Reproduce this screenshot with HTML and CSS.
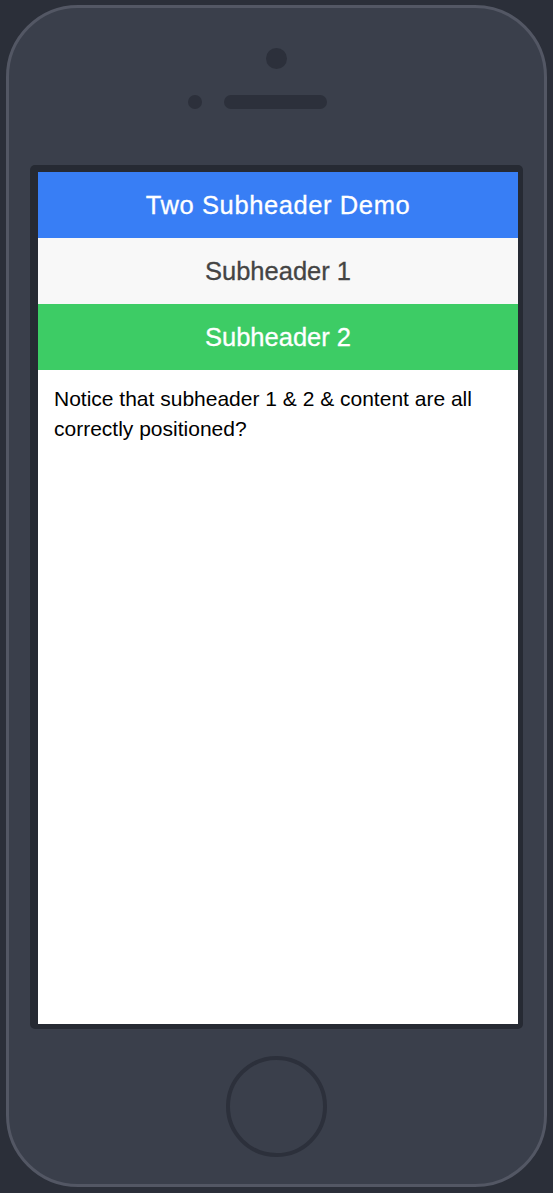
FILE: index.html
```html
<!DOCTYPE html>
<html>
<head>
<meta charset="utf-8">
<title>Two Subheader Demo</title>
<link rel="stylesheet" href="styles.css">
</head>
<body>
<div class="phone">
  <div class="camera"></div>
  <div class="sensors">
    <div class="sensor-dot"></div>
    <div class="speaker"></div>
  </div>
  <div class="bezel">
    <div class="screen">
      <div class="bar bar-header"><h1 class="title">Two Subheader Demo</h1></div>
      <div class="bar bar-sub1"><h2 class="title">Subheader 1</h2></div>
      <div class="bar bar-sub2"><h2 class="title">Subheader 2</h2></div>
      <div class="content">
        <p>Notice that subheader 1 &amp; 2 &amp; content are all correctly positioned?</p>
      </div>
    </div>
  </div>
  <div class="home-button"></div>
</div>
</body>
</html>
```

FILE: styles.css
```css
html, body {
  margin: 0;
  padding: 0;
}

body {
  background: #2b2f39;
  width: 553px;
  height: 1193px;
  overflow: hidden;
  font-family: "Liberation Sans", Arial, sans-serif;
}

.phone {
  box-sizing: border-box;
  margin: 5px 0 0 6px;
  width: 541px;
  height: 1182px;
  border: 3px solid #535764;
  border-radius: 72px;
  background: #3a3f4b;
  display: flex;
  flex-direction: column;
  align-items: center;
}

.camera {
  margin-top: 40px;
  width: 21px;
  height: 21px;
  border-radius: 50%;
  background: #2c303b;
}

.sensors {
  margin-top: 26px;
  display: flex;
  align-items: center;
  gap: 22px;
  margin-left: -38px;
}

.sensor-dot {
  width: 14px;
  height: 14px;
  border-radius: 50%;
  background: #2c303b;
}

.speaker {
  width: 103px;
  height: 14px;
  border-radius: 7px;
  background: #2c303b;
}

.bezel {
  margin-top: 56px;
  box-sizing: border-box;
  width: 493px;
  height: 864px;
  padding: 7px 5px 5px 8px;
  border-radius: 5px;
  background: #262a33;
}

.screen {
  width: 480px;
  height: 852px;
  background: #fff;
  display: flex;
  flex-direction: column;
}

.bar {
  height: 66px;
  flex: none;
  display: flex;
  align-items: center;
  justify-content: center;
}

.title {
  margin: 0;
  font-size: 25.5px;
  font-weight: 400;
  line-height: 66px;
  -webkit-text-stroke: 0.3px currentColor;
}

.bar-header {
  background: #387ef5;
  color: #fff;
}

.bar-header .title {
  letter-spacing: 0.6px;
}

.bar-sub1 {
  background: #f8f8f8;
  color: #444;
}

.bar-sub2 {
  background: #3dcc65;
  color: #fff;
}

.content {
  padding: 14px 16px;
  color: #000;
}

.content p {
  margin: 0;
  font-size: 21px;
  line-height: 30px;
}

.home-button {
  margin-top: 27px;
  box-sizing: border-box;
  width: 101px;
  height: 101px;
  border-radius: 50%;
  border: 4px solid #2c303b;
}
```
